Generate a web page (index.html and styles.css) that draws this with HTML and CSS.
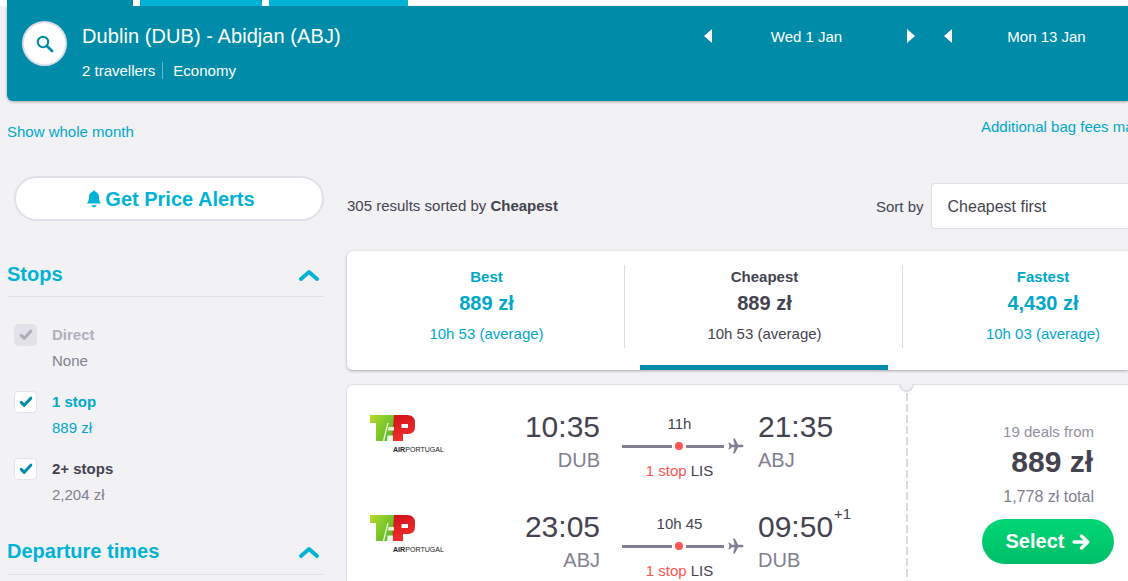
FILE: index.html
```html
<!DOCTYPE html>
<html lang="en">
<head>
    <meta charset="UTF-8">
    <meta name="viewport" content="width=device-width, initial-scale=1.0">
    <title>Dublin (DUB) - Abidjan (ABJ)</title>
    <link rel="stylesheet" href="styles.css">
</head>
<body>
    <!-- shared shapes -->
    <svg class="defs" width="0" height="0">
        <linearGradient id="lime" x1="0" y1="0" x2="1" y2="0.6">
            <stop offset="0" stop-color="#b9d92b"/>
            <stop offset="1" stop-color="#55b92c"/>
        </linearGradient>
        <linearGradient id="red" x1="0" y1="0" x2="0.3" y2="1">
            <stop offset="0" stop-color="#cf1019"/>
            <stop offset="1" stop-color="#f0302c"/>
        </linearGradient>
        <symbol id="chevron" viewBox="0 0 20 12">
            <path d="M2 10 L10 3 L18 10" fill="none" stroke="currentColor" stroke-width="3.8" stroke-linecap="round" stroke-linejoin="round"/>
        </symbol>
        <symbol id="tick" viewBox="0 0 14 12">
            <path d="M2.2 6.3 L5.3 9.3 L11.8 2.2" fill="none" stroke="currentColor" stroke-width="3" stroke-linecap="round" stroke-linejoin="round"/>
        </symbol>
        <symbol id="plane" viewBox="0 0 16 16">
            <path d="M15.6 8 C15.6 7 14.4 6.7 13.2 6.7 H10.2 L6.8 0.6 H5 L6.7 6.7 H3.6 L2 4.8 H0.4 L1.4 8 L0.4 11.2 H2 L3.6 9.3 H6.7 L5 15.4 H6.8 L10.2 9.3 H13.2 C14.4 9.3 15.6 9 15.6 8 Z" fill="currentColor"/>
        </symbol>
        <symbol id="tap" viewBox="0 0 76 40">
            <path d="M0 1 H26 L23 27 H6 V9 H0 Z" fill="url(#lime)"/>
            <path d="M24 1 H37 Q45 1 45 9 V13 Q45 20 38 20 H33 V27 H22 Z" fill="url(#red)"/>
            <path d="M13.5 27 L18 9" fill="none" stroke="#e8f3cf" stroke-width="1.4"/>
            <path d="M18.5 13 H24 V16.5 H18 Z" fill="#e8f3cf"/>
            <path d="M17.5 21.5 H23 V27 H17 Z" fill="#f3f8e6"/>
            <path d="M31.5 10 H38 V14 H31.5 Z" fill="#fff"/>
            <text x="23" y="38.4" class="logo-text" textLength="51" lengthAdjust="spacingAndGlyphs"><tspan class="logo-bold">AIR</tspan>PORTUGAL</text>
        </symbol>
    </svg>

    <div class="top-tabs">
        <div class="top-tab active"></div>
        <div class="top-tab second"></div>
        <div class="top-tab third"></div>
    </div>

    <header class="search-bar">
        <button class="search-button">
            <svg width="18" height="18" viewBox="0 0 18 18">
                <circle cx="7" cy="7" r="5.2" fill="none" stroke="#008ca8" stroke-width="2.1"/>
                <path d="M11 11 L16 16" stroke="#008ca8" stroke-width="2.8" stroke-linecap="round"/>
            </svg>
        </button>
        <div class="search-info">
            <div class="route">Dublin (DUB) - Abidjan (ABJ)</div>
            <div class="details"><span class="travellers">2 travellers</span><span>Economy</span></div>
        </div>
        <div class="dates">
            <svg class="arrow" viewBox="0 0 8 14"><path d="M8 0 V14 L0 7 Z"/></svg>
            <span class="date">Wed 1 Jan</span>
            <svg class="arrow" viewBox="0 0 8 14"><path d="M0 0 V14 L8 7 Z"/></svg>
            <svg class="arrow return" viewBox="0 0 8 14"><path d="M8 0 V14 L0 7 Z"/></svg>
            <span class="date date-back">Mon 13 Jan</span>
        </div>
    </header>

    <div class="links">
        <a class="month-link">Show whole month</a>
        <a class="bag-link">Additional bag fees may apply</a>
    </div>

    <div class="content">
        <aside class="filters">
            <button class="alerts">
                <svg width="16" height="18" viewBox="0 0 16 18">
                    <path d="M8 0.5 C8.8 0.5 9.3 1 9.3 1.8 C11.8 2.5 13 4.6 13 7.2 C13 10.5 14 12 15.2 13.6 H0.8 C2 12 3 10.5 3 7.2 C3 4.6 4.2 2.5 6.7 1.8 C6.7 1 7.2 0.5 8 0.5 Z M5.5 15.2 H10.5 C10.2 16.6 9.2 17.3 8 17.3 C6.8 17.3 5.8 16.6 5.5 15.2 Z" fill="currentColor"/>
                </svg>
                <span>Get Price Alerts</span>
            </button>

            <div class="filter-title">
                <span>Stops</span>
                <svg width="20" height="12"><use href="#chevron"/></svg>
            </div>
            <div class="stops">
                <div class="stop disabled">
                    <span class="checkbox"><svg width="14" height="12"><use href="#tick"/></svg></span>
                    <div><div class="stop-name">Direct</div><div class="stop-price">None</div></div>
                </div>
                <div class="stop hovered">
                    <span class="checkbox"><svg width="14" height="12"><use href="#tick"/></svg></span>
                    <div><div class="stop-name">1 stop</div><div class="stop-price">889 zł</div></div>
                </div>
                <div class="stop">
                    <span class="checkbox"><svg width="14" height="12"><use href="#tick"/></svg></span>
                    <div><div class="stop-name">2+ stops</div><div class="stop-price">2,204 zł</div></div>
                </div>
            </div>
            <div class="filter-title">
                <span>Departure times</span>
                <svg width="20" height="12"><use href="#chevron"/></svg>
            </div>
        </aside>

        <main class="results">
            <div class="results-head">
                <div class="count">305 results sorted by <b>Cheapest</b></div>
                <div class="sort">
                    <span>Sort by</span>
                    <div class="sort-select">Cheapest first</div>
                </div>
            </div>

            <div class="sort-tabs">
                <div class="sort-tab">
                    <div class="tab-name">Best</div>
                    <div class="tab-price">889 zł</div>
                    <div class="tab-time">10h 53 (average)</div>
                </div>
                <div class="sort-tab selected">
                    <div class="tab-name">Cheapest</div>
                    <div class="tab-price">889 zł</div>
                    <div class="tab-time">10h 53 (average)</div>
                </div>
                <div class="sort-tab">
                    <div class="tab-name">Fastest</div>
                    <div class="tab-price">4,430 zł</div>
                    <div class="tab-time">10h 03 (average)</div>
                </div>
            </div>

            <div class="ticket">
                <div class="legs">
                    <div class="leg">
                        <svg class="airline" width="76" height="40"><use href="#tap"/></svg>
                        <div class="depart">
                            <div class="time">10:35</div>
                            <div class="code">DUB</div>
                        </div>
                        <div class="path">
                            <div class="duration">11h</div>
                            <div class="line"><i class="bar first"></i><i class="dot"></i><i class="bar last"></i><svg width="16" height="16"><use href="#plane"/></svg></div>
                            <div class="via"><span class="red">1 stop</span> LIS</div>
                        </div>
                        <div class="arrive">
                            <div class="time">21:35</div>
                            <div class="code">ABJ</div>
                        </div>
                    </div>
                    <div class="leg">
                        <svg class="airline" width="76" height="40"><use href="#tap"/></svg>
                        <div class="depart">
                            <div class="time">23:05</div>
                            <div class="code">ABJ</div>
                        </div>
                        <div class="path">
                            <div class="duration">10h 45</div>
                            <div class="line"><i class="bar first"></i><i class="dot"></i><i class="bar last"></i><svg width="16" height="16"><use href="#plane"/></svg></div>
                            <div class="via"><span class="red">1 stop</span> LIS</div>
                        </div>
                        <div class="arrive">
                            <div class="time">09:50<span class="next-day">+1</span></div>
                            <div class="code">DUB</div>
                        </div>
                    </div>
                </div>
                <div class="offer">
                    <span class="notch"></span>
                    <div class="deals">19 deals from</div>
                    <div class="price">889 zł</div>
                    <div class="total">1,778 zł total</div>
                    <button class="select">
                        <span>Select</span>
                        <svg width="18" height="16" viewBox="0 0 18 16">
                            <path d="M2 8 H15 M9.5 2 L15.8 8 L9.5 14" fill="none" stroke="#fff" stroke-width="3.4" stroke-linecap="round" stroke-linejoin="round"/>
                        </svg>
                    </button>
                </div>
            </div>
        </main>
    </div>
</body>
</html>
```

FILE: styles.css
```css
* {
    box-sizing: border-box;
}

body {
    margin: 0;
    height: 581px;
    overflow: hidden;
    background: #f2f2f5;
    color: #444350;
    font-family: "Liberation Sans", Arial, sans-serif;
    font-size: 15px;
    line-height: 20px;
}

button {
    margin: 0;
    padding: 0;
    font-family: inherit;
    cursor: pointer;
}

.defs {
    display: block;
}

/* header */
.top-tabs {
    display: flex;
    gap: 7px;
    height: 6px;
    padding-left: 7px;
    background: #fff;
}

.top-tab {
    background: #00b2d6;
}

.top-tab.active {
    width: 126px;
    background: #008ca8;
}

.top-tab.second {
    width: 122px;
}

.top-tab.third {
    width: 139px;
}

.search-bar {
    display: flex;
    align-items: flex-start;
    height: 95px;
    margin-left: 7px;
    padding: 15px 0 0 15px;
    background: #008ca8;
    border-radius: 0 0 0 6px;
    box-shadow: 0 1px 3px rgba(0, 0, 0, 0.3);
    color: #fff;
}

.search-button {
    display: flex;
    align-items: center;
    justify-content: center;
    flex-shrink: 0;
    width: 45px;
    height: 45px;
    border: 2px solid #dddde8;
    border-radius: 50%;
    background: #fff;
}

.search-info {
    flex-shrink: 0;
    width: 637px;
    padding: 3px 0 0 15px;
}

.route {
    font-size: 20px;
    letter-spacing: 0.07px;
    line-height: 24px;
}

.details {
    display: flex;
    margin-top: 13px;
    line-height: 20px;
}

.travellers {
    height: 17px;
    margin: 1px 10px 0 0;
    padding-right: 7px;
    border-right: 1px solid #66bacb;
    line-height: 18px;
}

.dates {
    display: flex;
    align-items: center;
    padding-top: 4px;
}

.arrow {
    flex-shrink: 0;
    width: 8px;
    height: 14px;
    fill: #fff;
}

.arrow.return {
    margin-left: 29px;
}

.date {
    width: 195px;
    padding: 2px 6px 0 0;
    text-align: center;
}

.date-back {
    width: 176px;
    padding: 2px 0 0 13px;
}

.links {
    display: flex;
    justify-content: space-between;
    height: 76px;
    padding: 16px 0 0 7px;
    color: #00a7cb;
    white-space: nowrap;
}

.month-link {
    padding-top: 5px;
}

.bag-link {
    width: 147px;
    overflow: hidden;
}

.content {
    display: flex;
}

/* filters */
.filters {
    width: 317px;
    margin-left: 7px;
}

.alerts {
    display: flex;
    align-items: center;
    justify-content: center;
    gap: 3px;
    width: 310px;
    height: 45px;
    margin: -1px 0 0 7px;
    padding: 1px 0 0 3px;
    border: 2px solid #e0e0e8;
    border-radius: 23px;
    background: #fff;
    color: #00b2d6;
    font-size: 20px;
    font-weight: bold;
}

.filter-title {
    display: flex;
    justify-content: space-between;
    height: 35px;
    margin-top: 41px;
    border-bottom: 1px solid #dfdfe6;
    color: #00b2d6;
    font-size: 20px;
    font-weight: bold;
    line-height: 24px;
}

.filter-title svg {
    margin: 7px 5px 0 0;
}

.stops {
    padding: 28px 0 0 7px;
}

.stops + .filter-title {
    height: 36px;
    margin-top: 13px;
}

.stop {
    display: flex;
    gap: 15px;
    height: 67px;
}

.checkbox {
    display: flex;
    align-items: center;
    justify-content: center;
    width: 23px;
    height: 22px;
    margin-top: -1px;
    border: 1px solid #e2e2e9;
    border-radius: 4px;
    background: #fff;
    color: #008ca8;
}

.stop-name {
    margin-bottom: 6px;
    font-weight: bold;
}

.stop-price {
    color: #81808f;
}

.disabled .checkbox {
    background: #e3e2e9;
    color: #aeacba;
}

.disabled .stop-name {
    color: #b2aebd;
}

.hovered .stop-name,
.hovered .stop-price {
    color: #00a7cb;
}

/* results */
.results {
    flex: 1;
    min-width: 0;
    margin-left: 23px;
}

.results-head {
    display: flex;
    padding-top: 6px;
}

.count {
    flex-shrink: 0;
    width: 529px;
    padding-top: 13px;
}

.sort {
    display: flex;
    flex: 1;
    gap: 7px;
}

.sort span {
    padding-top: 14px;
    white-space: nowrap;
}

.sort-select {
    flex: 1;
    height: 46px;
    padding: 13px 16px;
    border: 1px solid #dfdfe6;
    border-right: none;
    border-radius: 4px 0 0 4px;
    background: #fff;
    font-size: 16px;
    white-space: nowrap;
}

.sort-tabs {
    display: flex;
    height: 119px;
    margin-top: 22px;
    background: #fff;
    border-radius: 6px 0 0 6px;
    box-shadow: 0 1px 3px rgba(0, 0, 0, 0.3);
}

.sort-tab {
    flex-shrink: 0;
    width: 278px;
    height: 83px;
    margin-top: 14px;
    padding: 2px 0 0 2px;
    border-right: 1px solid #dcdce3;
    color: #00a7cb;
    text-align: center;
}

.sort-tab:last-child {
    width: 225px;
    padding-left: 55px;
    border-right: none;
    white-space: nowrap;
}

.sort-tab.selected {
    color: #444350;
}

.selected::after {
    content: "";
    display: block;
    width: 248px;
    height: 5px;
    margin: 21px 0 0 13px;
    background: #008ca8;
}

.tab-name {
    font-weight: bold;
}

.tab-price {
    margin: 4px 0 9px;
    font-size: 20px;
    font-weight: bold;
    line-height: 24px;
}

/* ticket */
.ticket {
    display: flex;
    height: 196px;
    margin-top: 15px;
    background: #fff;
    border-radius: 6px 0 0 0;
    box-shadow: 0 0 2px rgba(0, 0, 0, 0.25);
}

.legs {
    flex-shrink: 0;
    width: 559px;
    padding: 24px 0 0 23px;
}

.leg {
    display: flex;
    height: 100px;
}

.leg:last-child {
    height: 72px;
}

.airline {
    margin-top: 5px;
}

.depart {
    width: 155px;
    padding-right: 1px;
    text-align: right;
}

.time {
    font-size: 30px;
    line-height: 36px;
}

.code {
    margin-top: 3px;
    color: #81808f;
    font-size: 20px;
    line-height: 24px;
}

.path {
    width: 123px;
    margin-left: 21px;
    padding-top: 5px;
}

.duration,
.via {
    width: 115px;
    text-align: center;
}

.line {
    display: flex;
    align-items: center;
    height: 16px;
    margin-top: 4px;
    color: #81808f;
}

.bar {
    height: 3px;
    background: #81808f;
}

.bar.first {
    width: 50px;
}

.bar.last {
    width: 38px;
}

.dot {
    width: 8px;
    height: 8px;
    margin: 0 3px;
    border-radius: 50%;
    background: #ff5452;
}

.line svg {
    margin-left: 4px;
    flex-shrink: 0;
}

.via {
    margin-top: 7px;
}

.red {
    color: #ff5452;
}

.arrive {
    margin-left: 13px;
    white-space: nowrap;
}

.next-day {
    margin-left: 1px;
    font-size: 15px;
    line-height: 0;
    vertical-align: 18px;
}

.offer {
    position: relative;
    width: 208px;
    padding-top: 37px;
    text-align: right;
}

/* dashed tear line */
.offer::before {
    content: "";
    position: absolute;
    left: 0;
    top: 8px;
    bottom: 0;
    width: 2px;
    background: repeating-linear-gradient(#dcdce0 0 8px, #fff 8px 11px);
}

.notch {
    position: absolute;
    left: -7px;
    top: -1px;
    width: 15px;
    height: 8px;
    border: 2px solid #dedee3;
    border-top: none;
    border-radius: 0 0 8px 8px;
    background: #f2f2f5;
}

.deals {
    padding-right: 20px;
    color: #91909c;
}

.price {
    margin-top: 2px;
    padding-right: 21px;
    font-size: 30px;
    font-weight: bold;
    line-height: 36px;
}

.total {
    margin-top: 7px;
    padding-right: 20px;
    color: #81808f;
    font-size: 16px;
}

.select {
    display: flex;
    align-items: center;
    justify-content: center;
    gap: 8px;
    width: 132px;
    height: 45px;
    margin: 12px 0 0 76px;
    border: none;
    border-radius: 23px;
    background: linear-gradient(#00d775, #00bd68);
    color: #fff;
    font-size: 20px;
    font-weight: bold;
}

.logo-text {
    fill: #222;
    font-size: 8px;
}

.logo-bold {
    font-weight: bold;
}
```
